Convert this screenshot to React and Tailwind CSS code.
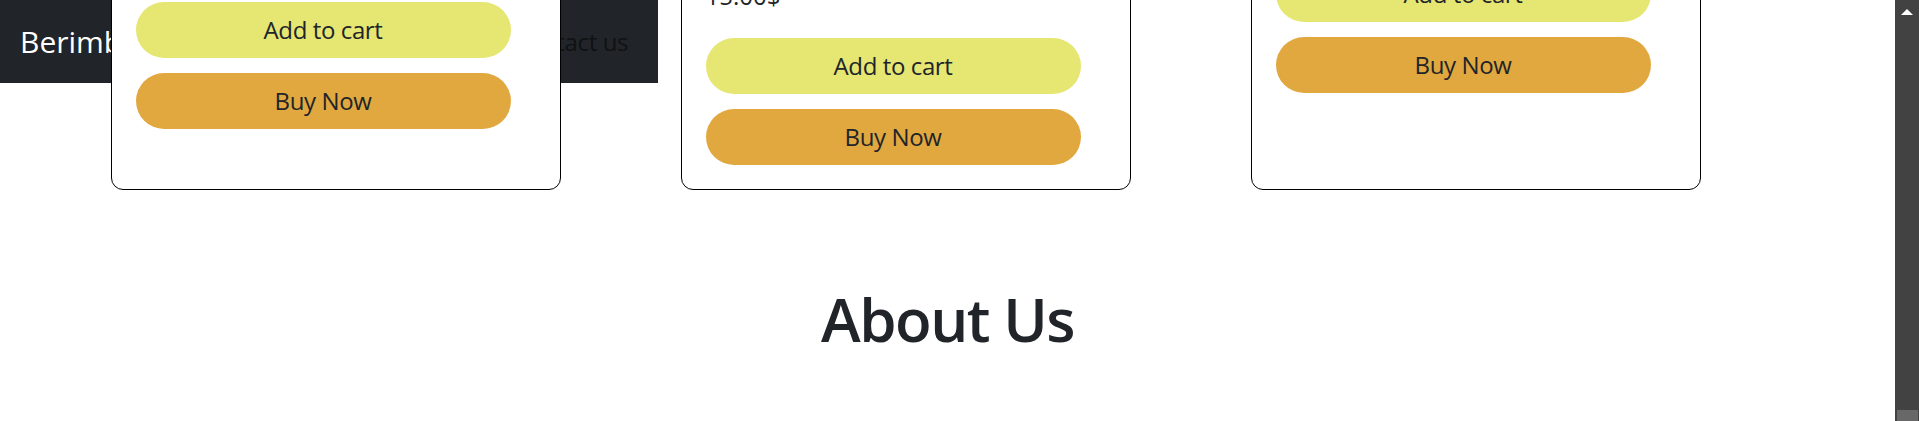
import React from 'react';

const products = [
    { title: 'Berimbau Viola', price: '25.00$', info: 'h-[253px]' },
    { title: 'Berimbau Medio with hand painted cabaça', price: '15.00$', info: 'h-[289px]' },
    { title: 'Caxixi', price: '8.00$', info: 'h-[217px]' },
];

const navLinks = ['Home', 'About us', 'Contact us'];

const ProductCard = ({ product }) => (
    <div className="px-[18px] flex">
        <div className="w-[450px] border border-black rounded-[12px] p-[24px] flex flex-col bg-white">
            {/* Image, title and price sit above the visible area */}
            <div className={`${product.info} flex flex-col justify-end`}>
                <div className="flex-1 bg-gray-100 rounded-[8px] mb-[12px]" />
                <h5 className="text-[24px] leading-[36px] font-semibold truncate">{product.title}</h5>
                <p className="text-[24px] leading-[36px]">{product.price}</p>
            </div>
            <button className="mt-[24px] w-[375px] h-[56px] rounded-full bg-[#e6e673] text-[24px] leading-[36px] tracking-[-0.4px] text-[#212529]">
                Add to cart
            </button>
            <button className="mt-[15px] w-[375px] h-[56px] rounded-full bg-[#e2a840] text-[24px] leading-[36px] tracking-[-0.4px] text-[#212529]">
                Buy Now
            </button>
        </div>
    </div>
);

const App = () => {
    return (
        <div className="h-[421px] overflow-hidden flex bg-white text-[#212529] font-['Open_Sans','Noto_Sans',sans-serif]">
            <div className="relative flex-1 min-w-0">
                {/* Navbar */}
                <nav className="absolute top-0 left-0 w-[658px] h-[83px] bg-[#212529] flex items-center justify-between px-[18px] overflow-hidden">
                    <span className="pl-[2px] text-[30px] leading-[45px] text-white whitespace-nowrap">Berimbau</span>
                    <div className="flex items-center">
                        {navLinks.map((link) => (
                            <a key={link} className="px-[12px] text-[24px] leading-[36px] tracking-[-0.4px] text-black/55 whitespace-nowrap">
                                {link}
                            </a>
                        ))}
                    </div>
                </nav>

                {/* Products */}
                <main className="relative -mt-[300px]">
                    <div className="w-[1710px] mx-auto grid grid-cols-3">
                        {products.map((p) => (
                            <ProductCard key={p.title} product={p} />
                        ))}
                    </div>

                    {/* About */}
                    <h1 className="mt-[93px] text-center text-[60px] leading-[72px] font-semibold tracking-tight text-[#212529]">
                        About Us
                    </h1>
                </main>
            </div>

            {/* Scrollbar */}
            <div className="w-[24px] h-full bg-[#424242] flex flex-col items-center justify-between">
                <div className="mt-[9px] w-0 h-0 border-l-[6px] border-r-[6px] border-b-[6px] border-l-transparent border-r-transparent border-b-white" />
                <div className="w-[21px] h-[11px] bg-[#686868]" />
            </div>
        </div>
    );
};

export default App;
